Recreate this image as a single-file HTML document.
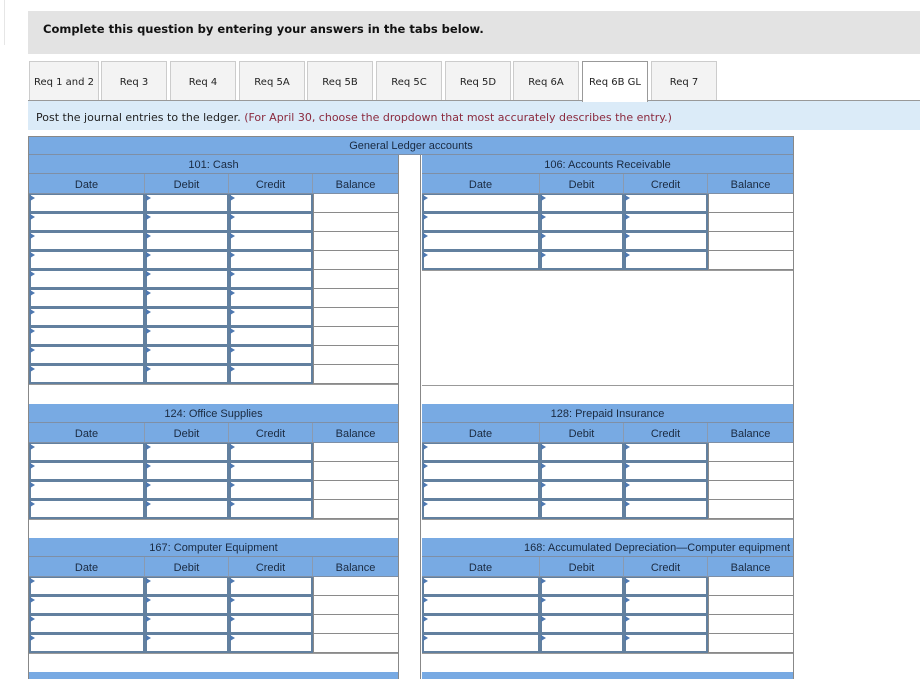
<!DOCTYPE html>
<html><head><meta charset="utf-8"><style>
body{margin:0;width:920px;height:679px;overflow:hidden;background:#fff;font-family:"Liberation Sans",Arial,sans-serif;position:relative}
.a{position:absolute;box-sizing:border-box}
.v{font-family:"DejaVu Sans",Verdana,sans-serif}
.tab{position:absolute;top:61px;height:39px;background:#f3f3f3;border:1px solid #ccc;border-bottom:none;font-size:10px;color:#222;text-align:center;line-height:41px;box-sizing:border-box}
.hd{background:#78aae3;font-size:11px;color:#1a2a40;text-align:center;line-height:21px;border-bottom:1px solid #7f8fa5;border-right:1px solid #8a9ab0}
.in{background:#fff;border:2px solid #62809f;border-top-width:1px}
.in:before{content:"";position:absolute;left:-1px;top:0;border-left:5px solid #4e78b0;border-top:3px solid transparent;border-bottom:3px solid transparent}
.bal{background:#fff;border-bottom:1px solid #8a8a8a;border-left:1px solid #8a8a8a}
</style></head><body>
<div class="a" style="left:0;top:0;width:5px;height:45px;border-right:1px solid #e6e6e6"></div>
<div class="a" style="left:28px;top:11px;width:892px;height:43px;background:#e3e3e3"></div>
<div class="a v" style="left:43px;top:22px;font-size:11.5px;font-weight:bold;color:#111">Complete this question by entering your answers in the tabs below.</div>
<div class="a" style="left:28px;top:100px;width:892px;height:1px;background:#999"></div>
<div class="a" style="left:28px;top:101px;width:892px;height:29px;background:#dbebf8"></div>
<div class="a v" style="left:36px;top:111px;font-size:11px;color:#222">Post the journal entries to the ledger. <span style="color:#8b2a3e">(For April 30, choose the dropdown that most accurately describes the entry.)</span></div>
<div id="tabs"></div>
<div class="a" style="left:28px;top:136px;width:766px;height:543px;border:1px solid #888;border-bottom:none"></div>
<div class="a hd" style="left:29px;top:137px;width:764px;height:18px;line-height:19px;border-right:none">General Ledger accounts</div>
<div class="a" style="left:398px;top:155px;width:23px;height:524px;background:#fff;border-left:1px solid #888;border-right:1px solid #888"></div>
<div id="g"></div>
<script>
var tabs=[["Req 1 and 2",29,70],["Req 3",101,66],["Req 4",170,66],["Req 5A",239,66],["Req 5B",307,66],["Req 5C",376,66],["Req 5D",445,66],["Req 6A",513,66],["Req 6B GL",582,66],["Req 7",651,66]];
var h="";
tabs.forEach(function(t,i){h+='<div class="tab v" style="left:'+t[1]+'px;width:'+t[2]+'px;'+(i==8?'background:#fff;height:41px;border-color:#999;':'')+'">'+t[0]+'</div>';});
document.getElementById("tabs").innerHTML=h;
var g="";
function sec(x,cols,y,name,rows){
  var w=cols[4]-cols[0];
  g+='<div class="a hd" style="left:'+x+'px;top:'+y+'px;width:'+w+'px;height:19px;border-right:none">'+name+'</div>';
  var L=["Date","Debit","Credit","Balance"];
  for(var c=0;c<4;c++)g+='<div class="a hd" style="left:'+cols[c]+'px;top:'+(y+19)+'px;width:'+(cols[c+1]-cols[c])+'px;height:20px;line-height:22px;'+(c==3?'border-right:none':'')+'">'+L[c]+'</div>';
  for(var r=0;r<rows;r++){var yy=y+39+r*19;
    for(var c=0;c<3;c++)g+='<div class="a in" style="left:'+cols[c]+'px;top:'+yy+'px;width:'+(cols[c+1]-cols[c])+'px;height:19px"></div>';
    g+='<div class="a bal" style="left:'+cols[3]+'px;top:'+yy+'px;width:'+(cols[4]-cols[3])+'px;height:19px"></div>';}
  var e=y+39+rows*19;
  g+='<div class="a" style="left:'+x+'px;top:'+e+'px;width:'+w+'px;height:1px;background:#999"></div>';
}
var LC=[29,145,229,313,398],RC=[422,540,624,708,793];
sec(29,LC,155,"101: Cash",10);
sec(422,RC,155,"106: Accounts Receivable",4);
g+='<div class="a" style="left:422px;top:385px;width:371px;height:1px;background:#999"></div>';
sec(29,LC,404,"124: Office Supplies",4);
sec(422,RC,404,"128: Prepaid Insurance",4);
sec(29,LC,538,"167: Computer Equipment",4);
sec(422,RC,538,'<span style="position:absolute;right:3px">168: Accumulated Depreciation—Computer equipment</span>',4);
g+='<div class="a" style="left:29px;top:672px;width:369px;height:7px;background:#78aae3"></div>';
g+='<div class="a" style="left:422px;top:672px;width:371px;height:7px;background:#78aae3"></div>';
document.getElementById("g").innerHTML=g;
</script>
</body></html>
